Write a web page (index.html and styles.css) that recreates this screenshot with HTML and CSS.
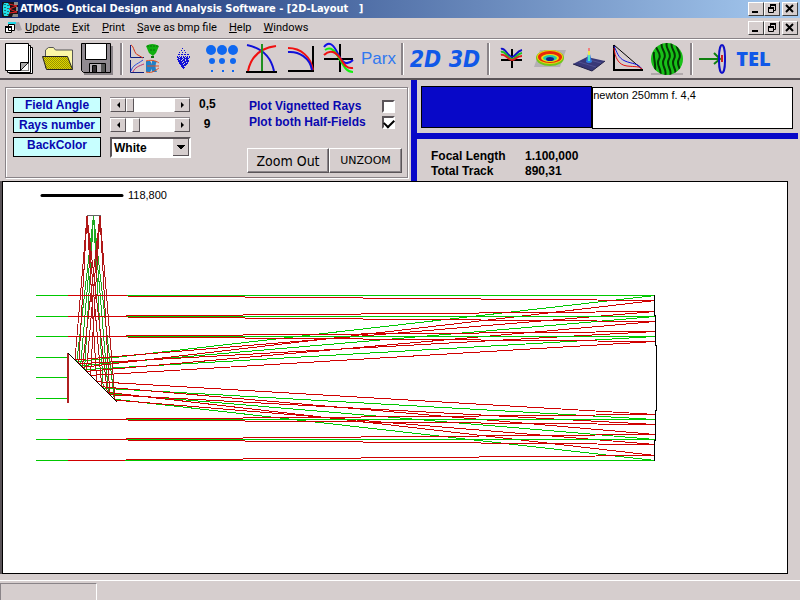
FILE: index.html
```html
<!DOCTYPE html>
<html lang="en">
<head>
<meta charset="utf-8">
<title>ATMOS - Optical Design and Analysis Software</title>
<link rel="stylesheet" href="styles.css">
</head>
<body>
<header class="titlebar">
  <svg class="app-icon" width="18" height="17" viewBox="0 0 18 17" aria-hidden="true">
    <path d="M1 1h16v15H1z" fill="#181418"/>
    <path d="M3 2h4l2 3v6l-2 4H3l-1-4V5z" fill="#20e0e8"/>
    <path d="M13 1h4v3h-4zM12 13h5v3h-6zM15 6h2v4h-2z" fill="#888"/>
    <path d="M16 5L8 3M16 5L8 8l8 3M8 12l8-1" fill="none" stroke="#e82020"/>
    <path d="M4 3v11M7 4v10" stroke="#101010" stroke-dasharray="1 2"/>
  </svg>
  <h1 class="title">ATMOS- Optical Design and Analysis Software - [2D-Layout &nbsp; ]</h1>
  <div class="window-buttons">
    <button type="button" class="win" aria-label="Minimize"><svg width="14" height="12"><path d="M3 9h6" stroke="#000" stroke-width="2"/></svg></button>
    <button type="button" class="win" aria-label="Restore"><svg width="14" height="12"><path d="M5 2h6M3 5h6" stroke="#000" stroke-width="2"/><path d="M5.500 2v3M10.500 2v5.500H9M3.500 5v4.500h5V5" fill="none" stroke="#000"/></svg></button>
    <button type="button" class="win close" aria-label="Close"><svg width="14" height="12"><path d="M3 2l7 7M10 2L3 9" stroke="#000" stroke-width="2"/></svg></button>
  </div>
</header>

<nav class="menubar">
  <svg class="doc-icon" width="18" height="16" viewBox="0 0 18 16" aria-hidden="true">
    <path d="M6 3l9-1 3 8-4 1z" fill="#aaa4a8"/>
    <path d="M4 3h8" stroke="#20d8e8" stroke-width="2"/>
    <path d="M4.500 4.500h6v6h-6zM1.500 6.500h6v6h-6z" fill="#fff" stroke="#000"/>
    <path d="M1 7h7" stroke="#000" stroke-width="2"/>
  </svg>
  <a href="#update"><u>U</u>pdate</a>
  <a href="#exit"><u>E</u>xit</a>
  <a href="#print"><u>P</u>rint</a>
  <a href="#save"><u>S</u>ave as bmp file</a>
  <a href="#help"><u>H</u>elp</a>
  <a href="#windows"><u>W</u>indows</a>
  <div class="window-buttons">
    <button type="button" class="win" aria-label="Minimize layout"><svg width="14" height="12"><path d="M3 9h6" stroke="#000" stroke-width="2"/></svg></button>
    <button type="button" class="win" aria-label="Restore layout"><svg width="14" height="12"><path d="M5 2h6M3 5h6" stroke="#000" stroke-width="2"/><path d="M5.500 2v3M10.500 2v5.500H9M3.500 5v4.500h5V5" fill="none" stroke="#000"/></svg></button>
    <button type="button" class="win close" aria-label="Close layout"><svg width="14" height="12"><path d="M3 2l7 7M10 2L3 9" stroke="#000" stroke-width="2"/></svg></button>
  </div>
</nav>

<div class="toolbar">
  <button type="button" class="tool" aria-label="New"><svg viewBox="0 39 39 40">
    <path d="M9.500 47.500h23v26h-23z" fill="#fff" stroke="#000"/><path d="M7.500 45.500h23v27h-23z" fill="#fff" stroke="#000"/><path d="M5.500 43.500h23v27h-23z" fill="#fff" stroke="#000"/>
    <path d="M28.500 62.500L20.500 70.500v-8z" fill="#aaa" stroke="#000"/><path d="M21 70.500L28.500 63v7.500z" fill="#fff"/>
  </svg></button>
  <button type="button" class="tool" aria-label="Open"><svg viewBox="39 39 39 40">
    <defs><pattern id="weave" width="2" height="2" patternUnits="userSpaceOnUse"><rect width="2" height="2" fill="#e0d800"/><path d="M0 0h1v1H0zM1 1h1v1H1z" fill="#989000"/></pattern></defs>
    <path d="M45.500 68V50l3-2.500h5l2 2.500h17v19" fill="#fcf8a8" stroke="#555"/>
    <path d="M42.500 56.500h25l5 13h-26z" fill="url(#weave)" stroke="#222"/>
  </svg></button>
  <button type="button" class="tool" aria-label="Save"><svg viewBox="78 39 39 40">
    <path d="M84 46h29v29H84z" fill="#8a8488"/><path d="M81.500 43.500h29v29h-27l-2-2z" fill="#908a90" stroke="#000"/>
    <path d="M85.500 43.500h21v16h-21z" fill="#fff" stroke="#000"/><path d="M89.500 63.500h16v9h-16z" fill="#b8b2b8" stroke="#000"/><path d="M92.500 65.500h4v7h-4z" fill="#302c30" stroke="#000"/><path d="M101 64h4v8h-4z" fill="#555"/>
  </svg></button>
  <span class="sep"></span>
  <button type="button" class="tool" aria-label="Analysis summary"><svg viewBox="125 39 39 40">
    <path d="M130.500 45v12.500H144M130.500 60v12.500H144" fill="none" stroke="#102080"/>
    <path d="M131 45c3 1 3 9 7 10l5 3" fill="none" stroke="#d83010"/>
    <path d="M131 71c2-6 5-6 12-11" fill="none" stroke="#2848e0"/><path d="M133 72c2-5 6-6 11-8" fill="none" stroke="#c03070"/>
    <path d="M146 46q6-4 13 0l-3 7-3 3-4-3z" fill="#10b010"/><path d="M147 46h11M150 50h6" stroke="#087008" stroke-dasharray="2 1"/><path d="M151 57h3" stroke="#107010" stroke-width="2"/>
    <path d="M146 61h4c3 3 3 8 0 11h-4zM152 61h5c-2 4-2 7 0 11h-5z" fill="#2080c8"/>
    <path d="M146 61c7-2 12 1 13 2M146 72c7 2 11-3 13-4M147 66h12" fill="none" stroke="#e05020"/>
  </svg></button>
  <button type="button" class="tool" aria-label="Spot diagram"><svg viewBox="164 39 39 40">
    <g stroke="#1010d8" shape-rendering="crispEdges"><path d="M182.500 48v3M179 52.500h8M181 50.500h5" stroke-dasharray="1 2"/><path d="M178 54.500h11M177 57.500h13M177 59.500h12" stroke-dasharray="2 1"/><path d="M177 56.500h13" stroke-dasharray="1 1"/><path d="M178 58.500h11M178 61.500h11M179 63.500h9M181 65.500h5M182 67.500h3" stroke-dasharray="5 1"/><path d="M178 60.500h11M179 62.500h9M180 64.500h7M181 66.500h4M183 68.500h1" stroke-dasharray="3 1"/></g>
  </svg></button>
  <button type="button" class="tool" aria-label="Through focus"><svg viewBox="203 39 39 40">
    <g fill="#1068f0"><circle cx="211" cy="50" r="5"/><circle cx="222" cy="50" r="5"/><circle cx="233" cy="50" r="5"/><circle cx="212" cy="61" r="3"/><circle cx="222" cy="61" r="3"/><circle cx="233" cy="61" r="3"/><path d="M211 70h2v2h-2zM222 70h2v2h-2zM232 70h2v2h-2z"/></g>
  </svg></button>
  <button type="button" class="tool" aria-label="Field curvature"><svg viewBox="242 39 39 40" fill="none" stroke-width="2">
    <path d="M246 72h31" stroke="#000"/><path d="M247 45c15 3 24 12 27 26" stroke="#1010d8"/><path d="M248 71c3-14 12-23 28-25" stroke="#f01010"/><path d="M262 44v27" stroke="#209020"/>
  </svg></button>
  <button type="button" class="tool" aria-label="Distortion"><svg viewBox="281 39 39 40" fill="none" stroke-width="2">
    <path d="M288 71h25V46" stroke="#000"/><path d="M288 48c13 0 23 9 25 22" stroke="#f01010"/><path d="M288 52c11-1 22 6 24 18" stroke="#1010d8"/>
  </svg></button>
  <button type="button" class="tool" aria-label="Ray fans"><svg viewBox="320 39 39 40" fill="none" stroke-width="2">
    <path d="M340 44v28M324 59h29" stroke="#000"/><path d="M324 47c5-7 10-2 14 7s9 12 15 6" stroke="#1010e8"/><path d="M325 50c6-4 10 1 14 8s7 14 14 14" stroke="#10f010"/><path d="M324 55c6-6 12-3 16 3s6 11 13 10" stroke="#f01010"/>
  </svg></button>
  <button type="button" class="tool word light">Parx</button>
  <span class="sep"></span>
  <button type="button" class="tool word slant">2D</button>
  <button type="button" class="tool word slant">3D</button>
  <span class="sep"></span>
  <button type="button" class="tool" aria-label="Wavefront fan"><svg viewBox="492 39 39 40" fill="none" stroke-width="2">
    <path d="M512 49v19M501 60h21" stroke="#000"/><path d="M501 49c4-2 7 8 11 8s4-6 10-7" stroke="#1010c8"/><path d="M501 52c4-2 7 7 11 7s4-5 10-6" stroke="#20c020"/><path d="M501 55c4-2 7 5 11 5s4-4 10-4" stroke="#e02020"/>
  </svg></button>
  <button type="button" class="tool" aria-label="Wavefront map"><svg viewBox="531 39 39 40">
    <path d="M540 50h26l-6 17h-26z" fill="#b4b0b4"/>
    <ellipse cx="550" cy="58" rx="14" ry="8" fill="#70c818"/><ellipse cx="550" cy="57" rx="13" ry="7" fill="#f0d010"/><ellipse cx="550" cy="57" rx="12" ry="6" fill="#e82808"/><ellipse cx="550" cy="58" rx="9" ry="4" fill="#e8e010"/><ellipse cx="550" cy="58" rx="7" ry="3" fill="#20c8b0"/><ellipse cx="550" cy="59" rx="4" ry="2" fill="#102090"/>
  </svg></button>
  <button type="button" class="tool" aria-label="Point spread function"><svg viewBox="570 39 39 40">
    <path d="M587 57l18 4-13 10-19-7z" fill="#383878"/><path d="M573 64l19 7 13-10" fill="none" stroke="#202048"/><path d="M579 62l17 5M586 59l15 4" stroke="#505090"/>
    <path d="M586 62l2-8h2l2 8q-3 2-6 0z" fill="#3080e0"/><path d="M588 54h2v7h-2z" fill="#50e8c0"/><path d="M588 51h2v4h-2z" fill="#e8e850"/><path d="M588 48h2v3h-2z" fill="#f08080"/>
  </svg></button>
  <button type="button" class="tool" aria-label="MTF"><svg viewBox="609 39 39 40" fill="none">
    <path d="M614 45v25h29" stroke="#000" stroke-width="2"/><path d="M614 45l29 25" stroke="#000"/><path d="M614 46c3 6 4 12 11 15s13 2 17 8" stroke="#1010e0"/><path d="M614 48c1 9 4 17 13 18s12 0 15 3" stroke="#e81010"/>
  </svg></button>
  <button type="button" class="tool" aria-label="Interferogram"><svg viewBox="648 39 39 40">
    <clipPath id="pupil"><circle cx="667" cy="59" r="16"/></clipPath>
    <path d="M651 74h32" stroke="#8a8488"/><circle cx="667" cy="59" r="16" fill="#18c018"/>
    <g clip-path="url(#pupil)" fill="none" stroke="#043804" stroke-width="2"><path d="M657 42c-5 6 6 10 2 17s4 10 1 17M662 42c-3 7 6 10 2 17s4 10 1 17M667 42c-3 7 6 10 2 17s4 10 1 17M672 42c-3 7 6 10 2 17s4 10 1 17M677 42c-3 7 6 10 2 17s4 10 1 17M654 52c-1 5 2 12 1 18"/></g>
  </svg></button>
  <span class="sep"></span>
  <button type="button" class="tool" aria-label="Focus"><svg viewBox="695 39 39 40" fill="none" stroke-width="2">
    <path d="M699 59h21M714 53l6 6-6 5" stroke="#108010"/><rect x="719" y="45" width="6" height="28" rx="3" ry="12" stroke="#1010c8"/><path d="M722 55v7" stroke="#d02020"/>
  </svg></button>
  <button type="button" class="tool word heavy">TEL</button>
</div>

<main class="panels">
  <section class="settings">
    <div class="frame">
      <div class="controls">
        <label class="tag" for="field">Field Angle</label>
        <div class="scroll"><button type="button" aria-label="Less angle"><i class="left"></i></button><input id="field" type="range" min="0" max="10" value="0"><button type="button" aria-label="More angle"><i class="right"></i></button></div>
        <output for="field">0,5</output>
        <label class="tag" for="rays">Rays number</label>
        <div class="scroll"><button type="button" aria-label="Fewer rays"><i class="left"></i></button><input id="rays" type="range" min="0" max="63" value="9"><button type="button" aria-label="More rays"><i class="right"></i></button></div>
        <output for="rays">9</output>
        <label class="tag" for="back">BackColor</label>
        <select id="back"><option>White</option><option>Black</option></select>
      </div>
      <div class="options">
        <label class="check">Plot Vignetted Rays<input type="checkbox"></label>
        <label class="check">Plot both Half-Fields<input type="checkbox" checked></label>
        <div class="zoom">
          <button type="button" class="large">Zoom Out</button><button type="button">UNZOOM</button>
        </div>
      </div>
    </div>
  </section>
  <section class="system">
    <div class="caption">
      <div class="swatch"></div>
      <textarea aria-label="System name">newton 250mm f. 4,4</textarea>
    </div>
    <dl class="facts">
      <dt>Focal Length</dt><dd>1.100,000</dd>
      <dt>Total Track</dt><dd>890,31</dd>
    </dl>
  </section>
</main>

<div class="layout">
  <svg class="drawing" role="img" aria-label="2D layout">
    <g transform="translate(-3 -182)">
      <path d="M42 195.500h80" stroke="#000" stroke-width="3" stroke-linecap="round"/>
      <text x="128" y="199" class="scale">118,800</text>
      <g id="plot" shape-rendering="crispEdges" fill="none"></g>
    </g>
  </svg>
</div>
<footer class="status"><div class="cell"></div></footer>
<script src="layout.js"></script>
</body>
</html>
```
FILE: styles.css
```css
* { box-sizing: border-box; }
body {
  margin: 0;
  min-height: 100vh;
  display: flex;
  flex-direction: column;
  background: #d6cece;
  color: #000;
  font: 11px/14px "Liberation Sans", sans-serif;
}
button, input, select, textarea { margin: 0; font: inherit; color: inherit; border-radius: 0; }
svg { display: block; }

.titlebar {
  display: flex;
  align-items: center;
  height: 18px;
  padding: 0 2px 0 1px;
  gap: 1px;
  background: linear-gradient(90deg, #0a246a, #a6caf0);
}
.title {
  margin: 0;
  color: #fff;
  font: bold 11px/18px "DejaVu Sans Condensed", "DejaVu Sans", sans-serif;
  white-space: nowrap;
}
.window-buttons { display: flex; margin-left: auto; }
.win {
  width: 16px;
  height: 14px;
  padding: 0;
  background: #d6cece;
  border: 1px solid;
  border-color: #fff #404040 #404040 #fff;
}
.close { margin-left: 2px; }

.menubar {
  display: flex;
  align-items: center;
  height: 20px;
  padding: 0 2px 0 4px;
  font: 11px/16px Roboto, sans-serif;
}
.menubar a { color: #000; text-decoration: none; margin-right: 12px; white-space: nowrap; }
.doc-icon { margin-right: 3px; }

.toolbar {
  display: flex;
  height: 42px;
  border-top: 1px solid #8a8488;
  border-bottom: 2px solid #5a5458;
  box-shadow: inset 0 1px #fff;
}
.tool { width: 39px; height: 40px; padding: 0; border: 0; background: none; }
.tool svg { width: 39px; height: 40px; }
.sep { width: 8px; display: flex; justify-content: center; padding: 4px 0 3px; }
.sep::before { content: ""; width: 2px; background: #8a8488; border-right: 1px solid #fff; }
.word { color: #1058e8; line-height: 40px; text-align: center; }
.light { color: #3078f0; font: 17px/40px "Liberation Sans", sans-serif; }
.slant { font: italic bold 23px/40px "DejaVu Sans Condensed", sans-serif; }
.heavy { font: 800 20px/40px "Open Sans", sans-serif; }

.panels { display: flex; height: 101px; }
.settings { flex: none; width: 417px; padding: 7px 3px 3px 5px; border-right: 6px solid #0808c8; }
.frame {
  display: flex;
  height: 91px;
  padding: 9px 5px 4px 7px;
  border: 1px solid #8a8488;
  box-shadow: inset 1px 1px #fff, 1px 1px #fff;
}
.controls {
  display: grid;
  grid-template-columns: 88px 80px 32px;
  grid-template-rows: 16px 16px 20px;
  column-gap: 9px;
  row-gap: 4px;
  font-size: 12px;
  font-weight: bold;
}
.tag { border: 1px solid #000; background: #c8ffff; color: #0808b0; text-align: center; line-height: 15px; }
.scroll { display: flex; height: 15px; background: #fff; border-top: 1px solid #8a8488; }
.scroll button {
  flex: none;
  display: grid;
  place-items: center;
  width: 16px;
  padding: 0;
  background: #d6cece;
  border: 1px solid;
  border-color: #fff #5a5458 #5a5458 #fff;
}
.scroll i { border: 3px solid transparent; }
.scroll .left { border-right-color: #000; border-left-width: 0; }
.scroll .right { border-left-color: #000; border-right-width: 0; }
.scroll input { appearance: none; flex: 1; min-width: 0; width: 48px; height: 14px; background: #fff; }
.scroll input::-webkit-slider-thumb {
  appearance: none;
  width: 8px;
  height: 14px;
  background: #d6cece;
  border: 1px solid;
  border-color: #fff #5a5458 #5a5458 #fff;
}
output { line-height: 14px; text-align: center; padding-right: 16px; }
select {
  appearance: none;
  width: 81px;
  height: 21px;
  padding: 0 2px;
  border: 2px solid;
  border-color: #5a5458 #fff #fff #5a5458;
  background:
    conic-gradient(from -45deg at 50% 100%, #000 90deg, transparent 0) right 4px top 6px / 8px 4px no-repeat,
    linear-gradient(#5a5458, #5a5458) right 0 bottom 0 / 16px 1px no-repeat,
    linear-gradient(#5a5458, #5a5458) right 0 top 0 / 1px 17px no-repeat,
    linear-gradient(#d6cece, #d6cece) right 0 top 0 / 16px 17px no-repeat,
    #fff;
}
.options { margin-left: auto; display: flex; flex-direction: column; width: 155px; padding-top: 1px; }
.check {
  display: flex;
  justify-content: space-between;
  align-items: center;
  height: 16px;
  padding: 0 7px 0 2px;
  color: #0808b0;
  font-size: 12px;
  font-weight: bold;
  white-space: nowrap;
}
.check input {
  appearance: none;
  width: 13px;
  height: 13px;
  display: grid;
  place-items: center;
  background: #fff;
  border: 2px solid;
  border-color: #5a5458 #fff #fff #5a5458;
}
.check input:checked::before {
  content: "";
  width: 8px;
  height: 5px;
  border: solid #000;
  border-width: 0 0 2px 2px;
  transform: rotate(-45deg);
}
.zoom { display: flex; margin-top: auto; font-family: "DejaVu Sans", sans-serif; }
.zoom button {
  flex: 1;
  height: 25px;
  padding: 0;
  background: #d6cece;
  border: 1px solid;
  border-color: #fff #5a5458 #5a5458 #fff;
  box-shadow: inset -1px -1px #8a8488;
}
.zoom .large { flex: none; width: 82px; font: 14px "DejaVu Sans Condensed", sans-serif; }

.system { flex: 1; min-width: 0; padding-right: 2px; }
.caption { display: flex; height: 59px; padding: 6px 5px 5px 4px; border-bottom: 6px solid #0808c8; }
.swatch { flex: 171; height: 42px; background: #0808c8; border: 1px solid #000; }
textarea {
  flex: 201;
  min-width: 0;
  height: 42px;
  margin-top: 1px;
  padding: 0;
  border: 1px solid #000;
  background: #fff;
  resize: none;
  overflow: hidden;
}
.facts {
  display: grid;
  grid-template-columns: 94px 1fr;
  row-gap: 1px;
  margin: 0;
  padding: 10px 14px;
  font-size: 12px;
  font-weight: bold;
}
.facts dd { margin: 0; }

.layout {
  flex: 1;
  display: flex;
  min-height: 300px;
  margin: 0 12px 6px 2px;
  border: 1px solid #000;
  background: #fff;
  box-shadow: -2px 0 #5a5458;
}
.drawing { flex: 1; min-width: 0; }
.scale { font: 11px "Liberation Sans", sans-serif; }

.status { display: flex; height: 20px; border-top: 1px solid #fff; padding-top: 2px; }
.cell { width: 97px; border: solid; border-width: 1px 1px 0; border-color: #8a8488 #fff #8a8488 #8a8488; }
```
FILE: layout.js
```js
// Traces a Newtonian: parallel rays, concave primary on the right, 45 degree flat.
const plot = document.getElementById("plot");
const RED = "#d00000";
const GREEN = "#00c800";
const primaryX = 655;
const focusX = -69;
const fold = 285; // the flat lies on y = x + fold

function draw(points, colour, width = 1) {
  const line = document.createElementNS("http://www.w3.org/2000/svg", "polyline");
  line.setAttribute("points", points.map(([x, y]) => `${x},${y}`).join(" "));
  line.setAttribute("stroke", colour);
  line.setAttribute("stroke-width", width);
  plot.append(line);
}

function reflect(y, focusY, colour, foldedColour) {
  const slope = (focusY - y) / (focusX - primaryX);
  const x = (y - slope * primaryX - fold) / (1 - slope);
  draw([[primaryX, y], [x, x + fold]], colour);
  draw([[x, x + fold], [focusY - fold, focusX + fold]], foldedColour);
}

const heights = [295.5, 316.5, 336.5, 419.5, 439.5, 460.5];

for (const y of heights) {
  draw([[36, y], [primaryX, y]], GREEN);
  reflect(y, 378.5, GREEN, "#20a820");
}
for (const y of [357.5, 377.5, 398.5]) draw([[36, y], [68, y]], GREEN);
for (const y of heights) {
  for (const tilt of [-5, 5]) {
    const end = y + tilt;
    if (end < 295 || end > 461) continue;
    draw([[68, y], [primaryX, end]], RED);
    reflect(end, 378.5 + Math.sign(tilt) * 6.5, RED, "#b01818");
  }
}
for (const y of heights) draw([[127, y], [primaryX, y]], GREEN);

draw([[87, 215.5], [101, 215.5]], "#666");
draw([[68, 353], [68, 403]], "#b02020", 2);
draw([[68.5, 353.5], [117.5, 402.5]], "#000");
draw([[654.5, 295], [654.5, 315], [655.5, 316], [655.5, 345], [656.5, 346], [656.5, 410], [655.5, 411], [655.5, 440], [654.5, 441], [654.5, 461]], "#000");
```
